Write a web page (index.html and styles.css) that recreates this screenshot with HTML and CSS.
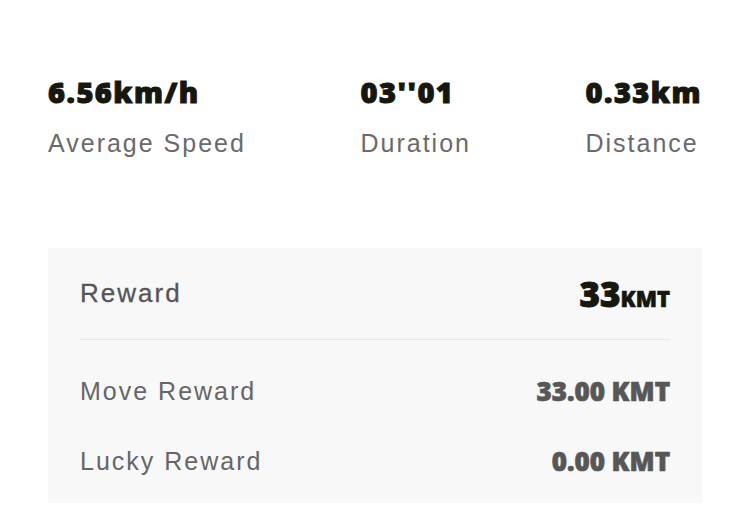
FILE: index.html
```html
<!DOCTYPE html>
<html lang="en">
<head>
    <meta charset="UTF-8">
    <title>Move Summary</title>
    <link rel="stylesheet" href="styles.css">
</head>
<body>
    <div class="page">
        <div class="stats">
            <div class="stat">
                <div class="stat-value">6.56km/h</div>
                <div class="stat-label">Average Speed</div>
            </div>
            <div class="stat">
                <div class="stat-value">03''01</div>
                <div class="stat-label">Duration</div>
            </div>
            <div class="stat">
                <div class="stat-value">0.33km</div>
                <div class="stat-label">Distance</div>
            </div>
        </div>

        <div class="reward-card">
            <div class="reward-head">
                <span class="head-label">Reward</span>
                <span class="head-value">33<small>KMT</small></span>
            </div>
            <div class="reward-list">
                <div class="reward-row">
                    <span class="row-label">Move Reward</span>
                    <span class="row-value">33.00 KMT</span>
                </div>
                <div class="reward-row">
                    <span class="row-label">Lucky Reward</span>
                    <span class="row-value">0.00 KMT</span>
                </div>
            </div>
        </div>
    </div>
</body>
</html>
```
FILE: styles.css
```css
* {
    margin: 0;
    padding: 0;
    box-sizing: border-box;
}
body {
    background-color: #FFFFFF;
    font-family: 'Liberation Sans', Arial, sans-serif;
    color: #666666;
}
.page {
    padding: 75px 47px 0 48px;
}
.stats {
    display: flex;
    justify-content: space-between;
}
.stat-value {
    font-family: 'Noto Sans', sans-serif;
    font-weight: 900;
    font-size: 29px;
    line-height: 34px;
    letter-spacing: 1.5px;
    color: #16170F;
    -webkit-text-stroke: 1px #16170F; /* heavier than the bold face */
}
.stat-label {
    margin-top: 19px;
    font-size: 25px;
    line-height: 30px;
    letter-spacing: 2px;
    color: #6A6A6A;
}
.reward-card {
    margin-top: 90px;
    padding: 0 32px;
    background-color: #F8F8F8;
}
.reward-head {
    display: flex;
    justify-content: space-between;
    align-items: center;
    height: 92px;
    border-bottom: 1px solid #E8E8E8;
}
.head-label {
    font-size: 26px;
    letter-spacing: 2px;
    color: #555555;
    -webkit-text-stroke: 0.3px #555555;
}
.head-value {
    font-family: 'Noto Sans', sans-serif;
    font-weight: 900;
    font-size: 35px;
    color: #16170F;
    -webkit-text-stroke: 1px #16170F;
}
.head-value small {
    font-size: 22px;
    -webkit-text-stroke: 0.6px #16170F;
}
.reward-list {
    padding: 16px 0 7px;
}
.reward-row {
    display: flex;
    justify-content: space-between;
    align-items: center;
    height: 70px;
}
.row-label {
    font-size: 25px;
    letter-spacing: 2px;
    color: #666666;
}
.row-value {
    font-family: 'Noto Sans', sans-serif;
    font-weight: 900;
    font-size: 26px;
    color: #575757;
    -webkit-text-stroke: 0.7px #575757;
}
```
